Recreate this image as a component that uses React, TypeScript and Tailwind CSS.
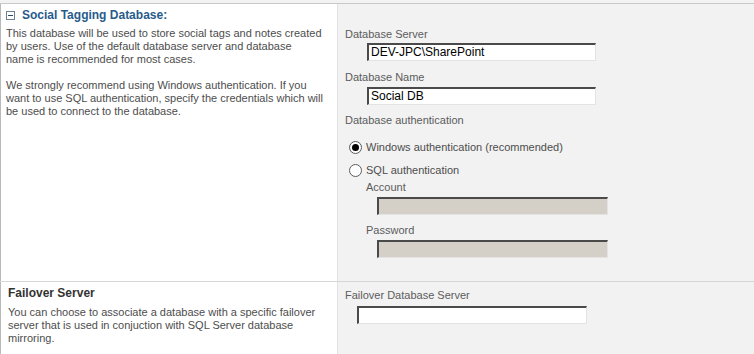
const font = { fontFamily: '"Liberation Sans", Arial, sans-serif' };

const TextBox = ({ value, disabled, width, indent }: { value?: string; disabled?: boolean; width: string; indent: string }) => (
  <div
    className={`${indent} ${width} h-[18px] border-t-2 border-l-2 border-t-[#4a4a4a] border-l-[#4a4a4a] border-r border-b border-r-[#e3e3e3] border-b-[#e3e3e3] ${
      disabled ? 'bg-[#d4d0c8]' : 'bg-white'
    } pl-[2px] text-[12px] leading-[15px] text-black`}
  >
    {value}
  </div>
);

const Radio = ({ checked, label }: { checked?: boolean; label: string }) => (
  <div className="flex items-center h-[16px] ml-[11px]">
    <div className="w-[13px] h-[13px] rounded-full border border-[#5a5a5a] bg-white flex items-center justify-center">
      {checked && <div className="w-[7px] h-[7px] rounded-full bg-black" />}
    </div>
    <span className="ml-[4px] text-[11px] leading-[13px] text-[#4d4d4d]">{label}</span>
  </div>
);

export default function App() {
  return (
    <div style={font} className="w-[754px] h-[354px] overflow-hidden bg-[#f3f3f3]">
      <div className="h-[3px]" />
      {/* Social tagging database */}
      <div className="flex h-[278px] border-t border-[#c9c9c9]">
        <div className="w-[337px] bg-white border-l border-[#b9b9b9] pl-[5px]">
          <div className="mt-[4px] flex items-center h-[14px]">
            <div className="w-[9px] h-[9px] border border-[#6f8296] bg-white flex items-center justify-center">
              <div className="w-[5px] h-[1px] bg-[#2c4a6a]" />
            </div>
            <span className="ml-[7px] text-[12px] font-bold text-[#275b8c] leading-[14px]">Social Tagging Database:</span>
          </div>
          <div className="mt-[5px] text-[11px] leading-[13px] text-[#4d4d4d]">
            This database will be used to store social tags and notes created<br />
            by users. Use of the default database server and database<br />
            name is recommended for most cases.
          </div>
          <div className="mt-[13px] text-[11px] leading-[13px] text-[#4d4d4d]">
            We strongly recommend using Windows authentication. If you<br />
            want to use SQL authentication, specify the credentials which will<br />
            be used to connect to the database.
          </div>
        </div>
        <div className="flex-1 bg-[#f2f2f2] border-l border-[#e2e2e2] text-[11px] leading-[13px] text-[#5c5c5c]">
          <div className="mt-[24px] ml-[7px]">Database Server</div>
          <div className="mt-[2px]">
            <TextBox value="DEV-JPC\SharePoint" width="w-[229px]" indent="ml-[29px]" />
          </div>
          <div className="mt-[10px] ml-[7px]">Database Name</div>
          <div className="mt-[3px]">
            <TextBox value="Social DB" width="w-[229px]" indent="ml-[29px]" />
          </div>
          <div className="mt-[9px] ml-[7px]">Database authentication</div>
          <div className="mt-[12px]">
            <Radio checked label="Windows authentication (recommended)" />
          </div>
          <div className="mt-[7px]">
            <Radio label="SQL authentication" />
          </div>
          <div className="mt-[3px] ml-[28px]">Account</div>
          <div className="mt-[3px]">
            <TextBox disabled width="w-[231px]" indent="ml-[39px]" />
          </div>
          <div className="mt-[9px] ml-[28px]">Password</div>
          <div className="mt-[3px]">
            <TextBox disabled width="w-[231px]" indent="ml-[39px]" />
          </div>
        </div>
      </div>
      {/* Failover server */}
      <div className="flex h-[73px] border-t border-[#d6d6d6]">
        <div className="w-[337px] bg-white border-l border-[#b9b9b9] pl-[7px]">
          <div className="mt-[5px] text-[12px] font-bold leading-[13px] text-[#333333]">Failover Server</div>
          <div className="mt-[6px] text-[11px] leading-[13px] text-[#4d4d4d]">
            You can choose to associate a database with a specific failover<br />
            server that is used in conjuction with SQL Server database<br />
            mirroring.
          </div>
        </div>
        <div className="flex-1 bg-[#f2f2f2] border-l border-[#e2e2e2] text-[11px] leading-[13px] text-[#5c5c5c]">
          <div className="mt-[7px] ml-[7px]">Failover Database Server</div>
          <div className="mt-[4px]">
            <TextBox width="w-[230px]" indent="ml-[19px]" />
          </div>
        </div>
      </div>
    </div>
  );
}
